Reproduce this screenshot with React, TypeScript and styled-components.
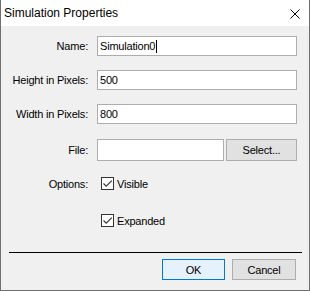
import React from "react";
import styled, { createGlobalStyle } from "styled-components";

const GlobalStyle = createGlobalStyle`
	body {
		margin: 0;
		background: #ffffff;
		font-family: "Liberation Sans", Arial, sans-serif;
	}
	* {
		box-sizing: border-box;
	}
`;

interface CheckProps {
	label: string;
}

const CheckOption: React.FC<CheckProps> = ({ label }) => (
	<CheckLabel>
		<CheckBox>
			<svg width="11" height="11" viewBox="0 0 11 11">
				<path d="M1.5 5.5 L4.2 8.2 L9.8 2.6" fill="none" stroke="#333" strokeWidth="1.1" />
			</svg>
		</CheckBox>
		{label}
	</CheckLabel>
);

const App: React.FC = () => {
	return (
		<>
			<GlobalStyle />
			<Window>
				<TitleBar>
					<Title>Simulation Properties</Title>
					<CloseIcon width="10" height="10" viewBox="0 0 10 10">
						<path d="M0.5 0.5 L9.5 9.5 M9.5 0.5 L0.5 9.5" stroke="#000" strokeWidth="1" />
					</CloseIcon>
				</TitleBar>
				<Body>
					<Row $top={0} $height={20}>
						<Label>Name:</Label>
						<TextBox>
							Simulation0
							<Caret />
						</TextBox>
					</Row>
					<Row $top={14} $height={20}>
						<Label>Height in Pixels:</Label>
						<TextBox>500</TextBox>
					</Row>
					<Row $top={14} $height={20}>
						<Label>Width in Pixels:</Label>
						<TextBox>800</TextBox>
					</Row>
					<Row $top={15} $height={22}>
						<Label>File:</Label>
						<FileGroup>
							<TextBox />
							<SelectButton>Select...</SelectButton>
						</FileGroup>
					</Row>
					<Row $top={16} $height={13}>
						<Label>Options:</Label>
						<CheckOption label="Visible" />
					</Row>
					<Row $top={24} $height={13}>
						<span />
						<CheckOption label="Expanded" />
					</Row>
					<Separator />
					<ButtonBar>
						<DialogButton $primary $width={63}>OK</DialogButton>
						<DialogButton $width={64}>Cancel</DialogButton>
					</ButtonBar>
				</Body>
			</Window>
		</>
	);
};

export default App;

const Window = styled.div`
	width: 310px;
	height: 291px;
	display: flex;
	flex-direction: column;
	border: 1px solid #6f6f6f;
	border-top: none;
	color: #000;
`;

const TitleBar = styled.div`
	height: 26px;
	flex-shrink: 0;
	background: #ffffff;
	display: flex;
	align-items: center;
	justify-content: space-between;
	padding: 0 9px 0 3px;
`;

const Title = styled.span`
	font-size: 12px;
	line-height: 26px;
`;

const CloseIcon = styled.svg`
	display: block;
	margin-top: 1px;
`;

const Body = styled.div`
	flex: 1;
	background: #f0f0f0;
	padding-top: 10px;
	display: flex;
	flex-direction: column;
	font-size: 11px;
	letter-spacing: -0.2px;
`;

const Row = styled.div<{ $top: number; $height: number }>`
	display: grid;
	grid-template-columns: 87px 200px;
	column-gap: 9px;
	align-items: center;
	margin-top: ${(p) => p.$top}px;
	height: ${(p) => p.$height}px;
`;

const Label = styled.span`
	text-align: right;
`;

const TextBox = styled.div`
	height: 100%;
	flex: 1;
	background: #ffffff;
	border: 1px solid #adadad;
	padding-left: 2px;
	display: flex;
	align-items: center;
	white-space: nowrap;
`;

const Caret = styled.span`
	display: inline-block;
	width: 1px;
	height: 13px;
	margin-left: 1px;
	background: #000;
`;

const FileGroup = styled.div`
	display: flex;
	height: 100%;
	gap: 2px;
`;

const SelectButton = styled.div`
	width: 71px;
	flex-shrink: 0;
	height: 100%;
	background: #e1e1e1;
	border: 1px solid #adadad;
	display: flex;
	align-items: center;
	justify-content: center;
`;

const CheckLabel = styled.label`
	display: flex;
	align-items: center;
	gap: 3px;
	padding-left: 4px;
	height: 13px;
`;

const CheckBox = styled.span`
	width: 13px;
	height: 13px;
	flex-shrink: 0;
	background: #ffffff;
	border: 1px solid #333333;
	display: flex;
	align-items: center;
	justify-content: center;
`;

const Separator = styled.div`
	height: 1px;
	margin: 25px 7px 0 8px;
	background: #000;
`;

const ButtonBar = styled.div`
	display: flex;
	justify-content: flex-end;
	gap: 7px;
	margin-top: 6px;
	padding-right: 13px;
`;

const DialogButton = styled.div<{ $primary?: boolean; $width: number }>`
	width: ${(p) => p.$width}px;
	height: 21px;
	display: flex;
	align-items: center;
	justify-content: center;
	background: ${(p) => (p.$primary ? "#e5f1fb" : "#e1e1e1")};
	border: 1px solid ${(p) => (p.$primary ? "#0078d7" : "#adadad")};
`;
